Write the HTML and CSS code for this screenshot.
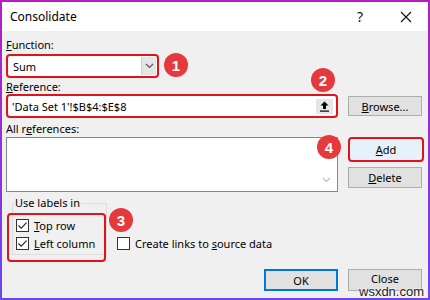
FILE: index.html
```html
<!DOCTYPE html>
<html>
<head>
<meta charset="utf-8">
<link rel="stylesheet" href="styles.css">
</head>
<body>
<div class="dialog">
  <div class="titlebar">
    <span class="title">Consolidate</span>
    <span class="help">?</span>
    <span class="close-x"><svg width="12" height="12" viewBox="0 0 12 12"><path d="M1 1L11 11M11 1L1 11" stroke="#111" stroke-width="1.1" fill="none"/></svg></span>
  </div>
  <div class="content">
    <div class="label lbl-func"><u>F</u>unction:</div>
    <div class="select hl">
      <span class="sel-text">Sum</span>
      <span class="drop"><svg width="9" height="6" viewBox="0 0 9 6"><path d="M1 1L4.5 4.5L8 1" stroke="#555" stroke-width="1.1" fill="none"/></svg></span>
    </div>
    <div class="label lbl-ref"><u>R</u>eference:</div>
    <div class="row">
      <div class="refbox hl">
        <span class="ref-text">'Data Set 1'!$B$4:$E$8</span>
        <span class="collapse"><svg width="11" height="11" viewBox="0 0 11 11"><path d="M5.5 0.5L9.5 4.5H7V8H4V4.5H1.5Z" fill="#000"/><rect x="1" y="9.5" width="9" height="1.2" fill="#000"/></svg></span>
      </div>
      <div class="btn browse"><u>B</u>rowse...</div>
    </div>
    <div class="label lbl-all">All r<u>e</u>ferences:</div>
    <div class="row">
      <div class="listbox">
        <span class="scroll-arrow"><svg width="9" height="6" viewBox="0 0 9 6"><path d="M1 1L4.5 4.5L8 1" stroke="#bdbdbd" stroke-width="1.1" fill="none"/></svg></span>
      </div>
      <div class="col">
        <div class="add hl"><u>A</u>dd</div>
        <div class="btn delete"><u>D</u>elete</div>
      </div>
    </div>
    <div class="row labels-row">
      <div class="group">
        <span class="legend">Use labels in</span>
        <div class="check"><span class="box"><svg width="11" height="11" viewBox="0 0 11 11"><path d="M1.5 5.5L4.2 8.2L9.6 2.6" stroke="#222" stroke-width="1.1" fill="none"/></svg></span><span><u>T</u>op row</span></div>
        <div class="check"><span class="box"><svg width="11" height="11" viewBox="0 0 11 11"><path d="M1.5 5.5L4.2 8.2L9.6 2.6" stroke="#222" stroke-width="1.1" fill="none"/></svg></span><span><u>L</u>eft column</span></div>
      </div>
      <div class="check create"><span class="box"></span><span>Create links to <u>s</u>ource data</span></div>
    </div>
    <div class="footer">
      <div class="btn ok">OK</div>
      <div class="btn close-btn">Close</div>
    </div>
  </div>
  <div class="hl-box labels-hl"></div>
  <span class="badge b1">1</span>
  <span class="badge b2">2</span>
  <span class="badge b3">3</span>
  <span class="badge b4">4</span>
  <span class="watermark">wsxdn.com</span>
</div>
</body>
</html>
```
FILE: styles.css
```css
html, body {
  margin: 0;
  padding: 0;
}
body {
  width: 430px;
  height: 300px;
  overflow: hidden;
  font-family: "Noto Sans", "Open Sans", sans-serif;
  font-size: 11px;
  color: #000;
}
.dialog {
  position: relative;
  width: 430px;
  height: 300px;
  box-sizing: border-box;
  border: 2px solid #a424c8;
  border-image: linear-gradient(180deg, #b41ec4 0%, #8a35dc 60%, #6a46f2 100%) 1;
  background: #f0f0f0;
  display: flex;
  flex-direction: column;
}
.titlebar {
  height: 29px;
  flex: none;
  background: #fff;
  display: flex;
  align-items: center;
  padding-left: 8px;
  padding-right: 16px;
}
.title {
  font-size: 12px;
  flex: 1;
}
.help {
  font-size: 14px;
  margin-right: 37px;
  color: #111;
}
.close-x {
  display: flex;
}
.content {
  padding: 0 6px 0 4px;
  display: flex;
  flex-direction: column;
}
.label {
  line-height: 15px;
  height: 15px;
}
.lbl-func { margin-top: 6px; }
.lbl-ref { margin-top: 1px; }
.lbl-all { margin-top: 3px; }
.hl {
  border: 2px solid #e0131b;
  border-radius: 4px;
  box-sizing: border-box;
}
.select {
  margin-top: 2px;
  width: 153px;
  height: 24px;
  background: #fff;
  display: flex;
  align-items: stretch;
  padding: 1px;
}
.sel-text {
  flex: 1;
  padding-left: 4px;
  display: flex;
  align-items: center;
}
.drop {
  width: 14px;
  background: #e5e5e5;
  border-left: 1px solid #cfcfcf;
  display: flex;
  align-items: center;
  justify-content: center;
}
.row {
  display: flex;
  gap: 10px;
}
.refbox {
  width: 332px;
  height: 24px;
  background: #fff;
  display: flex;
  align-items: center;
  padding: 0 3px 0 4px;
}
.ref-text {
  flex: 1;
}
.collapse {
  width: 17px;
  height: 15px;
  background: #e6e6e6;
  display: flex;
  align-items: center;
  justify-content: center;
}
.btn {
  width: 74px;
  height: 21px;
  box-sizing: border-box;
  background: #e1e1e1;
  border: 1px solid #adadad;
  display: flex;
  align-items: center;
  justify-content: center;
}
.browse {
  align-self: center;
  height: 20px;
}
.listbox {
  margin-top: 1px;
  width: 332px;
  height: 55px;
  box-sizing: border-box;
  background: #fff;
  border: 1px solid #828790;
  display: flex;
  justify-content: flex-end;
  align-items: flex-end;
  padding: 0 6px 5px 0;
}
.col {
  display: flex;
  flex-direction: column;
  margin-top: 1px;
}
.add {
  width: 76px;
  height: 25px;
  margin-right: -2px;
  background: #e5f1fb;
  display: flex;
  align-items: center;
  justify-content: center;
}
.delete {
  margin-top: 5px;
}
.labels-row {
  margin-top: 11px;
  gap: 0;
}
.group {
  position: relative;
  margin-left: 6px;
  width: 95px;
  height: 52px;
  box-sizing: border-box;
  border: 1px solid #dcdcdc;
  padding: 15px 0 0 3px;
}
.legend {
  position: absolute;
  top: -9px;
  left: 1px;
  padding: 0 1px;
  background: #f0f0f0;
  line-height: 15px;
}
.check {
  display: flex;
  align-items: center;
  height: 13px;
  gap: 5px;
  margin-bottom: 5px;
}
.box {
  width: 13px;
  height: 13px;
  box-sizing: border-box;
  border: 1px solid #333;
  background: #fff;
  display: flex;
  align-items: center;
  justify-content: center;
}
.create {
  margin-top: 34px;
  margin-left: 10px;
}
.footer {
  margin-top: 14px;
  display: flex;
  justify-content: flex-end;
  gap: 10px;
}
.footer .btn {
  height: 22px;
}
.close-btn {
  padding-bottom: 3px;
}
.ok {
  border: 2px solid #0078d7;
}
.hl-box {
  position: absolute;
  border: 2px solid #e0131b;
  border-radius: 4px;
}
.labels-hl {
  left: 5px;
  top: 211px;
  width: 95px;
  height: 45px;
}
.badge {
  position: absolute;
  width: 24px;
  height: 24px;
  border-radius: 50%;
  background: #e53a3d;
  color: #fff;
  font-family: "Liberation Sans", Arial, sans-serif;
  font-weight: bold;
  font-size: 15px;
  display: flex;
  align-items: center;
  justify-content: center;
}
.b1 { left: 162px; top: 51px; }
.b2 { left: 309px; top: 66px; }
.b3 { left: 107px; top: 206px; }
.b4 { left: 315px; top: 133px; }
.watermark {
  position: absolute;
  left: 357px;
  top: 282px;
  font-family: "Liberation Sans", Arial, sans-serif;
  font-size: 13px;
  line-height: 15px;
  color: #1c1c1c;
  text-shadow: 0 0 2px #fff, 0 0 2px #fff;
}
```
